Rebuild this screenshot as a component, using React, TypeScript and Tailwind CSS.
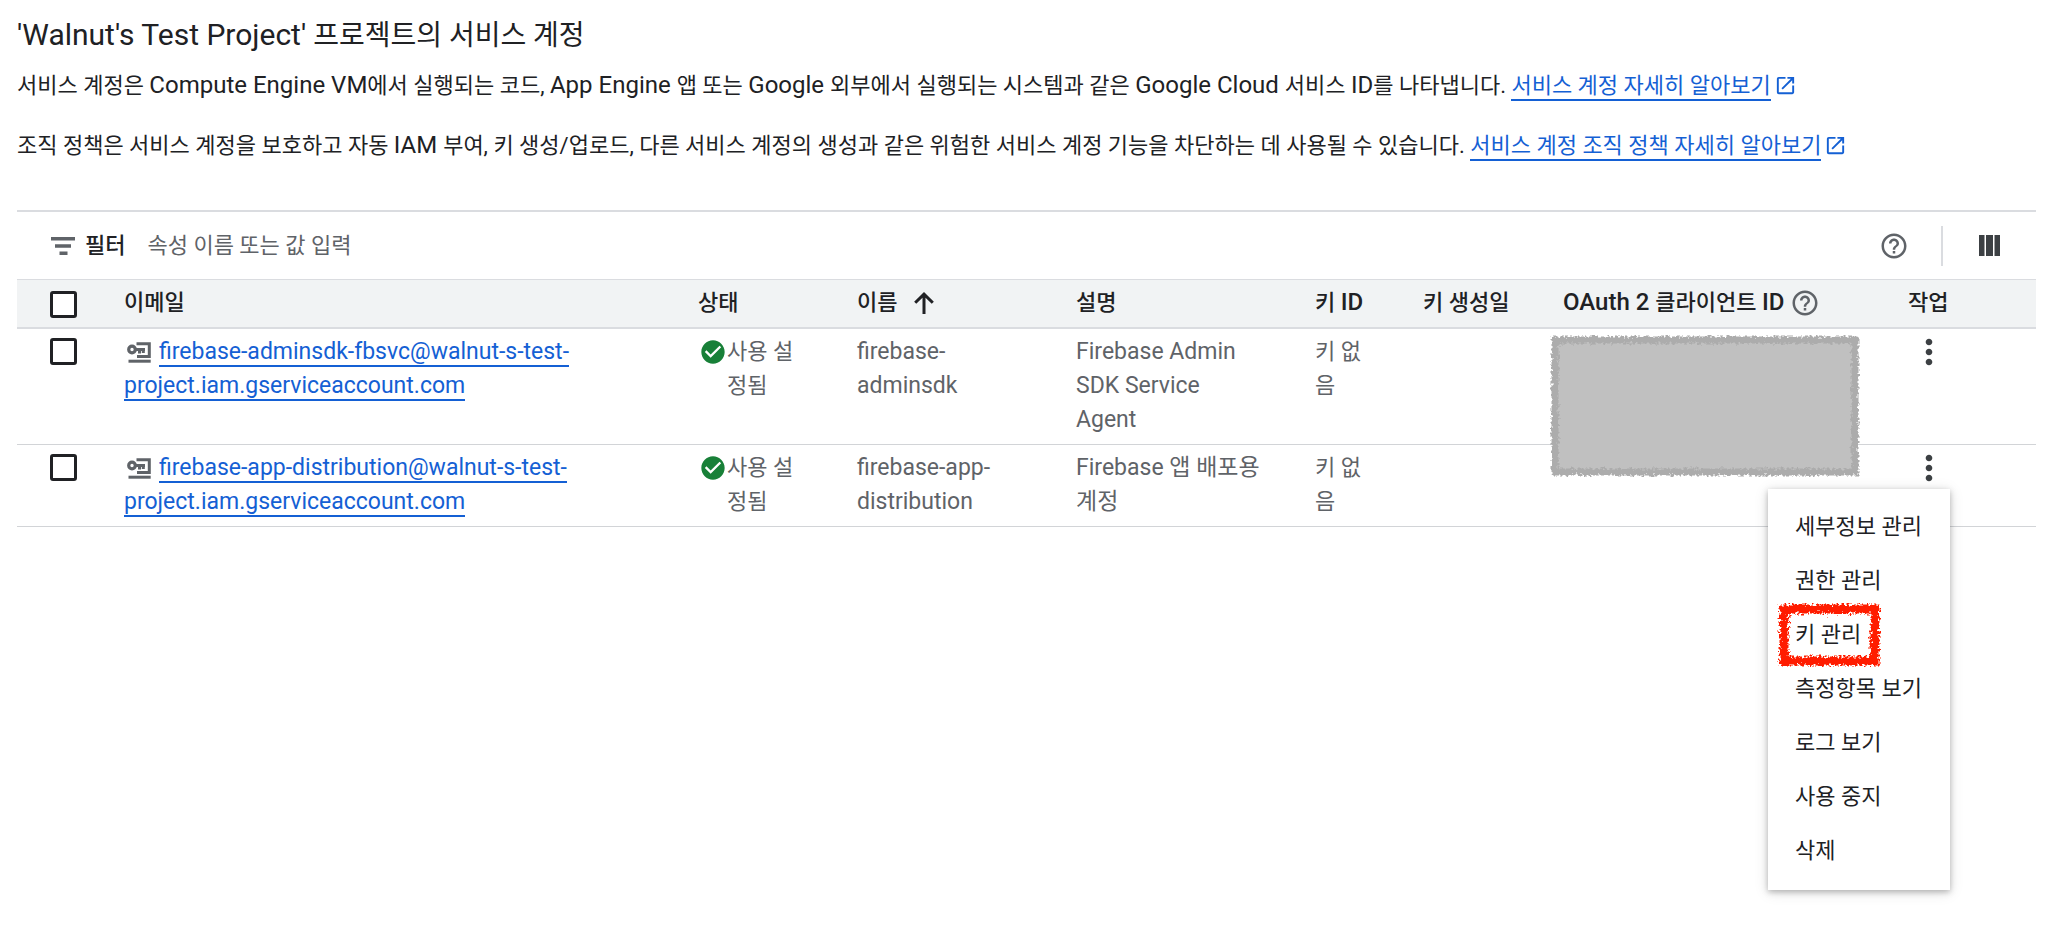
import { useId } from 'react';
import {
  MdCheckCircle,
  MdHelpOutline,
  MdMoreVert,
  MdOpenInNew,
} from 'react-icons/md';

type Account = {
  email: string;
  name: string;
  description: string;
};

const accounts: Account[] = [
  {
    email: 'firebase-adminsdk-fbsvc@walnut-s-test-project.iam.gserviceaccount.com',
    name: 'firebase-adminsdk',
    description: 'Firebase Admin SDK Service Agent',
  },
  {
    email: 'firebase-app-distribution@walnut-s-test-project.iam.gserviceaccount.com',
    name: 'firebase-app-distribution',
    description: 'Firebase 앱 배포용 계정',
  },
];

const menuItems = [
  '세부정보 관리',
  '권한 관리',
  '키 관리',
  '측정항목 보기',
  '로그 보기',
  '사용 중지',
  '삭제',
];

// Sets Latin runs slightly larger so they sit evenly beside Hangul.
function Mixed({ text }: { text: string }) {
  return (
    <>
      {text.split(/([A-Za-z][A-Za-z0-9 ]*)/).map((part, index) =>
        index % 2 === 1 ? (
          <span key={index} lang="en" className="text-[24px] leading-none">
            {part}
          </span>
        ) : (
          part
        ),
      )}
    </>
  );
}

function DocLink({ text }: { text: string }) {
  return (
    <a href="#docs" className="text-[#1460d4]">
      <span className="border-b-2 border-[#1460d4] pb-px">{text}</span>
      <MdOpenInNew className="ml-[3px] inline size-[23px] align-[-4px]" aria-hidden="true" />
    </a>
  );
}

function Checkbox({ label }: { label: string }) {
  return (
    <input
      type="checkbox"
      aria-label={label}
      className="block size-[27px] appearance-none rounded-[3px] border-3 border-[#202124] bg-white"
    />
  );
}

function FilterIcon() {
  return (
    <svg viewBox="0 0 24 18" className="ml-1 h-[18px] w-6" fill="#5f6368" aria-hidden="true">
      <path d="M0 0h24v3.600H0zM4 7.200h16v3.600H4zM8.500 14.400h8V18h-8z" />
    </svg>
  );
}

function ArrowUpIcon() {
  return (
    <svg viewBox="0 0 20 22" className="h-[22px] w-5" fill="none" stroke="#202124" strokeWidth="3" aria-hidden="true">
      <path d="M10 22V2.500M1.200 10.800 10 2.200l8.800 8.600" />
    </svg>
  );
}

function ServiceAccountIcon() {
  return (
    <svg viewBox="0 0 24 21" className="mr-2 ml-[3px] inline h-[21px] w-6 align-[-4px]" aria-hidden="true">
      <g fill="none" stroke="#5f6368">
        <circle cx="5" cy="7.500" r="3.300" strokeWidth="3.200" />
        <path d="M8 7.500h10M12.500 7.500v4M16.300 7.500v3.600" strokeWidth="3" />
        <path d="M9.500 1.800h12.800v12.800H10" strokeWidth="3" />
        <path d="M1.500 19.200h22.200" strokeWidth="3" />
      </g>
    </svg>
  );
}

function ColumnsIcon() {
  return (
    <svg viewBox="0 0 21 21" className="size-[21px]" fill="#3c4043" aria-hidden="true">
      <path d="M0 0h5.500v21H0zM7 0h7v21H7zM15.500 0H21v21h-5.500z" />
    </svg>
  );
}

function BrushedBlock() {
  const id = useId();
  return (
    <svg viewBox="0 0 310 142" className="absolute top-0 -left-[13px] z-10 h-[142px] w-[310px]" aria-hidden="true">
      <filter id={id} x="-5%" y="-5%" width="110%" height="110%">
        <feTurbulence type="fractalNoise" baseFrequency="0.35" numOctaves="2" seed="4" />
        <feDisplacementMap in="SourceGraphic" scale="7" xChannelSelector="R" yChannelSelector="G" />
      </filter>
      <rect x="5" y="5" width="300" height="132" fill="#c0c0c0" />
      <rect x="5" y="5" width="300" height="132" fill="none" stroke="#acacac" strokeWidth="7" filter={`url(#${id})`} />
    </svg>
  );
}

function BrushedFrame() {
  const id = useId();
  return (
    <svg
      viewBox="0 0 104 66"
      className="pointer-events-none absolute top-1/2 -left-[18px] h-[66px] w-[104px] -translate-y-1/2"
      aria-hidden="true"
    >
      <filter id={id} x="-10%" y="-10%" width="120%" height="120%">
        <feTurbulence type="fractalNoise" baseFrequency="0.4" numOctaves="2" seed="9" />
        <feDisplacementMap in="SourceGraphic" scale="10" xChannelSelector="R" yChannelSelector="G" />
      </filter>
      <rect x="7" y="7" width="91" height="52" fill="none" stroke="#ff1e00" strokeWidth="9" filter={`url(#${id})`} />
    </svg>
  );
}

function ActionsMenu() {
  return (
    <div
      role="menu"
      className="absolute top-full right-0 z-20 mt-1 flex w-[182px] flex-col bg-white pt-[11px] pb-3 shadow-[0_2px_6px_rgba(0,0,0,0.26),0_2px_14px_rgba(0,0,0,0.12)]"
    >
      {menuItems.map((item) => (
        <button key={item} type="button" role="menuitem" className="flex h-[54px] items-center px-[27px] text-left">
          <span className="relative whitespace-nowrap">
            {item}
            {item === '키 관리' && <BrushedFrame />}
          </span>
        </button>
      ))}
    </div>
  );
}

export default function App() {
  return (
    <main className="min-h-screen bg-white py-4 pr-3 pl-[17px] font-[Roboto,'Noto_Sans_CJK_KR',sans-serif] text-[22px] leading-[34px] text-[#202124]">
      <h1 className="text-[28px] leading-[38px]">
        <span lang="en" className="text-[30px]">
          'Walnut's Test Project'
        </span>{' '}
        프로젝트의 서비스 계정
      </h1>
      <p className="mt-[14px]">
        <Mixed text="서비스 계정은 Compute Engine VM에서 실행되는 코드, App Engine 앱 또는 Google 외부에서 실행되는 시스템과 같은 Google Cloud 서비스 ID를 나타냅니다." />{' '}
        <DocLink text="서비스 계정 자세히 알아보기" />
      </p>
      <p className="mt-[26px]">
        <Mixed text="조직 정책은 서비스 계정을 보호하고 자동 IAM 부여, 키 생성/업로드, 다른 서비스 계정의 생성과 같은 위험한 서비스 계정 기능을 차단하는 데 사용될 수 있습니다." />{' '}
        <DocLink text="서비스 계정 조직 정책 자세히 알아보기" />
      </p>

      <section className="mt-[47px] border-t-2 border-[#dadce0]">
        <div className="flex h-[67px] items-center pl-[30px]">
          <FilterIcon />
          <label htmlFor="filter" className="ml-2.5 font-medium">
            필터
          </label>
          <input
            id="filter"
            placeholder="속성 이름 또는 값 입력"
            className="ml-[22px] min-w-0 flex-1 outline-none placeholder:text-[#5f6368]"
          />
          <button type="button" aria-label="도움말" className="mr-8">
            <MdHelpOutline className="size-[30px] text-[#5f6368]" />
          </button>
          <div className="h-10 border-l-2 border-[#dadce0]" />
          <button type="button" aria-label="열 표시 옵션" className="mr-9 ml-9">
            <ColumnsIcon />
          </button>
        </div>

        <table className="w-full table-fixed border-collapse text-left">
          <colgroup>
            <col className="w-[107px]" />
            <col className="w-[574px]" />
            <col className="w-[159px]" />
            <col className="w-[219px]" />
            <col className="w-[239px]" />
            <col className="w-[108px]" />
            <col className="w-[140px]" />
            <col className="w-[345px]" />
            <col className="w-[128px]" />
          </colgroup>
          <thead>
            <tr className="h-12 border-t border-b-2 border-[#dadce0] bg-[#f1f3f4] *:font-medium">
              <th className="pt-[3px] pl-[33px]">
                <Checkbox label="모두 선택" />
              </th>
              <th>이메일</th>
              <th>상태</th>
              <th>
                <span className="flex items-center gap-[17px]">
                  이름 <ArrowUpIcon />
                </span>
              </th>
              <th>설명</th>
              <th>
                <Mixed text="키 ID" />
              </th>
              <th>키 생성일</th>
              <th>
                <span className="flex items-center gap-1.5">
                  <span>
                    <Mixed text="OAuth 2 클라이언트 ID" />
                  </span>
                  <MdHelpOutline className="size-[30px] text-[#5f6368]" aria-hidden="true" />
                </span>
              </th>
              <th>작업</th>
            </tr>
          </thead>
          <tbody className="text-[#5f6368]">
            {accounts.map((account, index) => (
              <tr key={account.name} className="border-b border-[#d2d4d7] align-top *:pt-1.5 *:pb-[7px]">
                <td className="pl-[33px]">
                  <div className="flex h-[34px] items-center">
                    <Checkbox label={account.name} />
                  </div>
                </td>
                <td className="pr-8 text-[23px]">
                  <ServiceAccountIcon />
                  <a href="#account" className="border-b-2 border-[#1460d4] text-[#1460d4]">
                    {account.email}
                  </a>
                </td>
                <td className="pr-[54px]">
                  <div className="flex">
                    <MdCheckCircle className="mt-[3px] ml-px size-7 shrink-0 text-[#188038]" aria-hidden="true" />
                    <span>사용 설정됨</span>
                  </div>
                </td>
                <td className="pr-12 text-[23px]">{account.name}</td>
                <td className="pr-[52px] text-[23px]">{account.description}</td>
                <td className="pr-[52px]">키 없음</td>
                <td />
                <td>
                  {index === 0 && (
                    <div className="relative">
                      <BrushedBlock />
                    </div>
                  )}
                </td>
                <td className="text-[#202124]">
                  <div className="relative w-[42px]">
                    <button
                      type="button"
                      aria-label="작업 더보기"
                      className="flex h-[34px] w-full items-center justify-center"
                    >
                      <MdMoreVert className="size-10 shrink-0 text-[#3c4043]" />
                    </button>
                    {index === 1 && <ActionsMenu />}
                  </div>
                </td>
              </tr>
            ))}
          </tbody>
        </table>
      </section>
    </main>
  );
}
